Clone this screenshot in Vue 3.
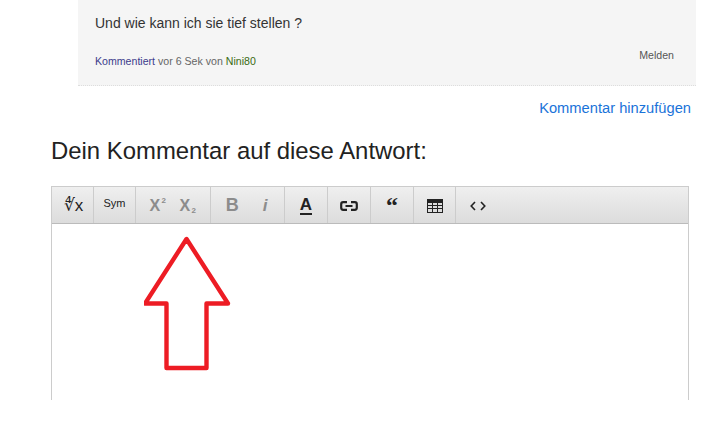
<script setup>
const groups = [
  { w: 42, cls: '', items: ['root'] },
  { w: 42, cls: '', items: ['sym'] },
  { w: 75, cls: 'muted', items: ['sup', 'sub'] },
  { w: 74, cls: 'muted', items: ['b', 'i'] },
  { w: 43, cls: '', items: ['a'] },
  { w: 43, cls: '', items: ['link'] },
  { w: 43, cls: '', items: ['quote'] },
  { w: 42, cls: '', items: ['table'] },
  { w: 44, cls: '', items: ['code'] }
]
</script>

<template>
  <div class="page">
    <section class="comment">
      <p class="body">Und wie kann ich sie tief stellen ?</p>
      <div class="meta">
        <span><a class="k">Kommentiert</a> vor 6 Sek von <a class="user">Nini80</a></span>
        <a class="report">Melden</a>
      </div>
    </section>
    <div class="add"><a>Kommentar hinzufügen</a></div>
    <h2>Dein Kommentar auf diese Antwort:</h2>
    <div class="editor">
      <div class="toolbar">
        <div v-for="(g, n) in groups" :key="n" class="group" :class="g.cls" :style="{ width: g.w + 'px' }">
          <template v-for="it in g.items" :key="it">
            <span v-if="it === 'root'" class="root"><i>∜</i>x</span>
            <span v-else-if="it === 'sym'" class="sym">Sym</span>
            <span v-else-if="it === 'sup'" class="xs">X<small class="up">2</small></span>
            <span v-else-if="it === 'sub'" class="xs second">X<small class="down">2</small></span>
            <span v-else-if="it === 'b'" class="bold">B</span>
            <span v-else-if="it === 'i'" class="ital">i</span>
            <span v-else-if="it === 'a'" class="under">A</span>
            <svg v-else-if="it === 'link'" width="18" height="10" viewBox="0 0 18 10" fill="none" stroke="#222" stroke-width="2.2">
              <path d="M7 1.2H3.2Q1.2 1.2 1.2 3.2V6.8Q1.2 8.8 3.2 8.8H7M11 1.2H14.8Q16.8 1.2 16.8 3.2V6.8Q16.8 8.8 14.8 8.8H11M5.5 5H12.5" />
            </svg>
            <span v-else-if="it === 'quote'" class="quote">“</span>
            <svg v-else-if="it === 'table'" width="16" height="14" viewBox="0 0 16 14">
              <path fill="#222" d="M0 0H16V14H0Z" />
              <path fill="#ddd" d="M1 4H5V6H1ZM6 4H10V6H6ZM11 4H15V6H11ZM1 7H5V9H1ZM6 7H10V9H6ZM11 7H15V9H11ZM1 10H5V13H1ZM6 10H10V13H6ZM11 10H15V13H11Z" />
            </svg>
            <svg v-else width="16" height="10" viewBox="0 0 16 10" fill="none" stroke="#222" stroke-width="1.6">
              <path d="M5 1 1.2 5 5 9M11 1 14.8 5 11 9" />
            </svg>
          </template>
        </div>
      </div>
      <svg class="arrow" width="90" height="136" viewBox="0 0 90 136" fill="none">
        <path d="M42.5 3 1 67.5H22.5V132H62.5V67.5H84Z" stroke="#ed1c24" stroke-width="4.4" stroke-linejoin="round" />
      </svg>
    </div>
  </div>
</template>

<style scoped>
.page {
  width: 717px;
  height: 439px;
  overflow: hidden;
  background: #fff;
  font-family: "Liberation Sans", Arial, sans-serif;
  color: #333;
}
a { text-decoration: none; }
.comment {
  box-sizing: border-box;
  width: 618px;
  height: 86px;
  margin-left: 78px;
  padding: 15px 22px 0 17px;
  background: #f5f5f5;
  border-bottom: 1px dotted #ddd;
}
.body {
  margin: 0;
  font-size: 14px;
  line-height: 16px;
  color: #333;
}
.meta {
  display: flex;
  justify-content: space-between;
  align-items: flex-start;
  margin-top: 22px;
  font-size: 10.6px;
  line-height: 16px;
  color: #666;
}
.k { color: #3c3c8c; }
.user { color: #3a6b12; }
.report {
  margin-top: -6px;
  color: #555;
}
.add {
  display: flex;
  justify-content: flex-end;
  padding: 14px 26px 0 0;
  font-size: 14.7px;
  line-height: 17px;
  color: #1a73d9;
}
h2 {
  margin: 21px 0 0 51px;
  font-size: 23.9px;
  line-height: 26px;
  font-weight: 400;
  color: #222;
}
.editor {
  position: relative;
  box-sizing: border-box;
  width: 638px;
  height: 214px;
  margin: 22px 0 0 51px;
  border: 1px solid #ccc;
  border-bottom: 0;
}
.toolbar {
  display: flex;
  height: 36px;
  border-bottom: 1px solid #bbb;
  background: linear-gradient(#efefef, #dcdcdc);
}
.group {
  box-sizing: border-box;
  display: flex;
  align-items: center;
  justify-content: center;
  gap: 13px;
  padding-top: 1px;
  border-right: 1px solid #ccc;
  color: #222;
}
.group:last-child { border-right: 0; }
.muted { color: #8c8c8c; }
.root { font-size: 17px; line-height: 36px; margin-left: 2px; }
.root i { font-style: normal; font-size: 17px; }
.sym { font-size: 11px; margin-top: -6px; }
.xs { position: relative; font-size: 16px; font-weight: 700; width: 17px; }
.xs small { position: absolute; font-size: 8px; font-weight: 700; left: 12px; }
.up { top: -1px; }
.down { bottom: 0; }
.bold { font-size: 18px; font-weight: 700; margin-right: 8px; margin-left: -2px; }
.ital { font-size: 17px; font-style: italic; font-weight: 700; margin-left: 3px; }
.under {
  font-size: 17px;
  font-weight: 700;
  line-height: 17px;
  border-bottom: 2px solid #222;
}
.quote {
  font-family: "Liberation Serif", serif;
  font-size: 24px;
  font-weight: 700;
  line-height: 24px;
  height: 24px;
  margin-top: -2px;
}
.arrow {
  position: absolute;
  left: 92px;
  top: 49px;
}
</style>
